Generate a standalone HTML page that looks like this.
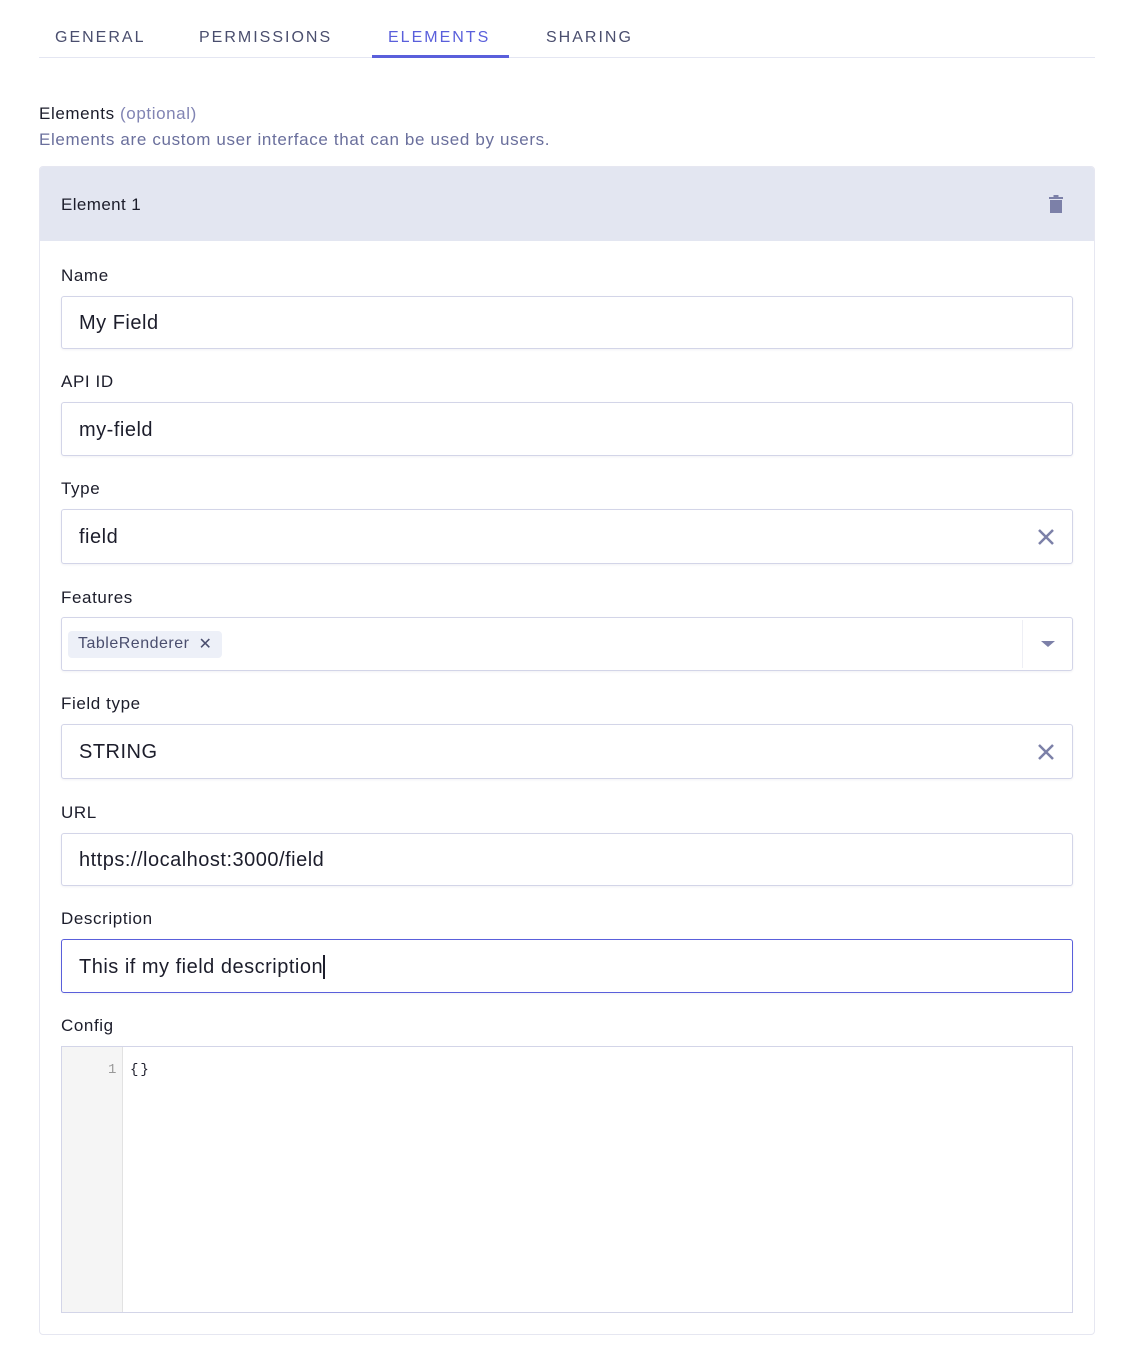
<!DOCTYPE html>
<html><head><meta charset="utf-8"><style>
*{box-sizing:border-box;margin:0;padding:0}
body{width:1126px;height:1348px;background:#fff;font-family:"Liberation Sans",sans-serif;color:#1c1d2b;position:relative;overflow:hidden}
.a{position:absolute}
.tab{position:absolute;top:28px;font-size:16px;letter-spacing:2px;color:#4a4e6e;line-height:20px}
.lbl{position:absolute;left:61px;font-size:17px;letter-spacing:0.6px;line-height:20px;color:#1c1d2b}
.inp{position:absolute;left:61px;width:1012px;border:1px solid #d3d5e8;border-radius:3px;background:#fff;box-shadow:0 1px 2px rgba(30,30,80,.06);font-size:20px;letter-spacing:0.5px;color:#1c1d2b;padding-left:17px;padding-top:2px;display:flex;align-items:center}
.x{position:absolute;right:17px;top:50%;margin-top:-9px}
</style></head><body>
<div class="tab" style="left:55px">GENERAL</div>
<div class="tab" style="left:199px">PERMISSIONS</div>
<div class="tab" style="left:388px;color:#5a5fdb">ELEMENTS</div>
<div class="tab" style="left:546px">SHARING</div>
<div class="a" style="left:39px;top:57px;width:1056px;height:1px;background:#e4e6f2"></div>
<div class="a" style="left:372px;top:55px;width:137px;height:3px;background:#5a5fdb"></div>

<div class="a" style="left:39px;top:104px;font-size:17px;letter-spacing:0.6px;line-height:20px">Elements <span style="color:#8184b3">(optional)</span></div>
<div class="a" style="left:39px;top:130px;font-size:17px;letter-spacing:0.65px;line-height:20px;color:#6a6f9c">Elements are custom user interface that can be used by users.</div>

<div class="a" style="left:39px;top:166px;width:1056px;height:1169px;border:1px solid #e6e7f1;border-radius:4px"></div>
<div class="a" style="left:40px;top:167px;width:1054px;height:74px;background:#e3e6f1;border-radius:3px 3px 0 0"></div>
<div class="a" style="left:61px;top:195px;font-size:17px;letter-spacing:0.4px;line-height:20px">Element 1</div>
<svg class="a" style="left:1048px;top:194px" width="16" height="20" viewBox="0 0 16 20"><rect x="5.5" y="1" width="5" height="2" fill="#7c80a8"/><rect x="1" y="3" width="14" height="2" fill="#7c80a8"/><rect x="2" y="6" width="12" height="13" fill="#7c80a8"/></svg>

<div class="lbl" style="top:266px">Name</div>
<div class="inp" style="top:296px;height:53px">My Field</div>
<div class="lbl" style="top:372px">API ID</div>
<div class="inp" style="top:402px;height:54px">my-field</div>
<div class="lbl" style="top:479px">Type</div>
<div class="inp" style="top:509px;height:55px">field<svg class="x" width="18" height="18" viewBox="0 0 18 18"><path d="M2 2L16 16M16 2L2 16" stroke="#7c80a8" stroke-width="2.5"/></svg></div>
<div class="lbl" style="top:588px">Features</div>
<div class="inp" style="top:617px;height:54px;padding-left:6px;padding-top:0">
 <div style="background:#edf0f8;border-radius:4px;height:27px;padding:0 10px;display:flex;align-items:center;font-size:16px;letter-spacing:0.5px;color:#4a4e6e">TableRenderer<span style="margin-left:9px;font-size:16px">✕</span></div>
 <div class="a" style="left:960px;top:2px;width:1px;height:48px;background:#eeeff5"></div>
 <svg class="a" style="left:978px;top:22px" width="16" height="8" viewBox="0 0 16 8"><path d="M1 1H15L8 7Z" fill="#7c80a8"/></svg>
</div>
<div class="lbl" style="top:694px">Field type</div>
<div class="inp" style="top:724px;height:55px">STRING<svg class="x" width="18" height="18" viewBox="0 0 18 18"><path d="M2 2L16 16M16 2L2 16" stroke="#7c80a8" stroke-width="2.5"/></svg></div>
<div class="lbl" style="top:803px">URL</div>
<div class="inp" style="top:833px;height:53px">https://localhost:3000/field</div>
<div class="lbl" style="top:909px">Description</div>
<div class="inp" style="top:939px;height:54px;border-color:#5a5fdb">This if my field description<span style="display:inline-block;width:2px;height:24px;background:#1c1d2b"></span></div>
<div class="lbl" style="top:1016px">Config</div>
<div class="a" style="left:61px;top:1046px;width:1012px;height:267px;border:1px solid #d3d5e8;background:#fff">
 <div class="a" style="left:0;top:0;width:61px;height:265px;background:#f5f5f5;border-right:1px solid #e2e2e2"></div>
 <div class="a" style="left:46px;top:15px;font-family:'Liberation Mono',monospace;font-size:14px;color:#999">1</div>
 <div class="a" style="left:68px;top:15px;font-family:'Liberation Mono',monospace;font-size:14px;letter-spacing:2px;color:#1c1d2b">{}</div>
</div>
</body></html>
